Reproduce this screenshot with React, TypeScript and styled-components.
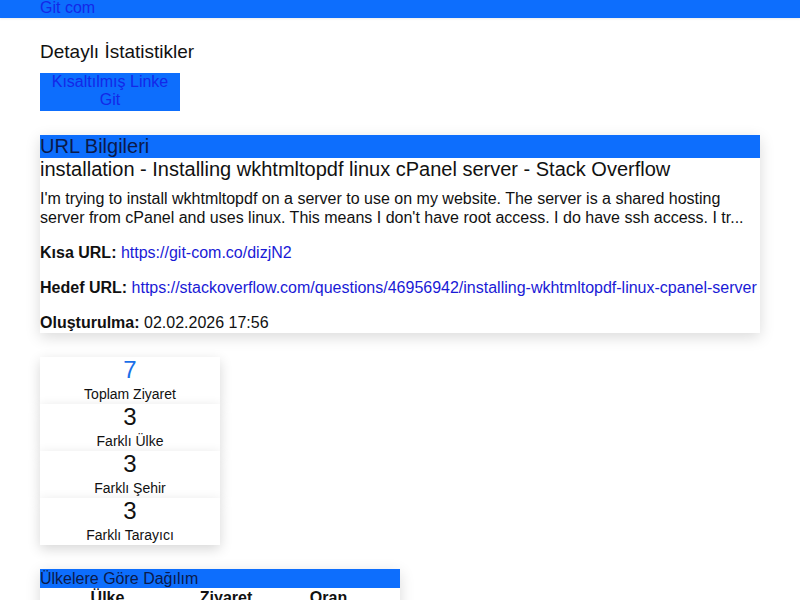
import React from 'react'
import styled, { createGlobalStyle } from 'styled-components'

const colors = {
  primary: '#0d6efd',
  link: '#1a1ad6',
  navLink: '#1428e8',
  ink: '#111111',
  onPrimary: '#0b1a4a',
}

const GlobalStyle = createGlobalStyle`
  html, body {
    margin: 0;
    padding: 0;
    background: #ffffff;
  }
  body {
    font-family: "Liberation Sans", Arial, sans-serif;
    font-size: 16px;
    color: ${colors.ink};
  }
`

const Navbar = styled.nav`
  height: 18px;
  background: ${colors.primary};
  padding: 0 40px;
  box-shadow: 0 1px 2px rgba(0, 0, 0, 0.08);
`

const Brand = styled.a`
  display: block;
  font-size: 16px;
  line-height: 16px;
  color: ${colors.navLink};
  text-decoration: none;
`

const Main = styled.main`
  width: 720px;
  padding: 23px 40px 40px;
  display: flex;
  flex-direction: column;
  align-items: flex-start;
`

const PageTitle = styled.h1`
  margin: 0;
  font-size: 19px;
  font-weight: 400;
  line-height: 22px;
`

const PrimaryButton = styled.a`
  display: block;
  width: 140px;
  margin-top: 10px;
  padding: 0 0 2px;
  background: ${colors.primary};
  color: ${colors.navLink};
  text-align: center;
  font-size: 16px;
  line-height: 18px;
  text-decoration: none;
`

const Card = styled.section<{ width?: string; gap?: string }>`
  width: ${(p) => p.width || '100%'};
  margin-top: ${(p) => p.gap || '24px'};
  background: #ffffff;
  box-shadow: 0 4px 14px rgba(0, 0, 0, 0.15);
`

const CardHeader = styled.h2<{ size?: string; lh?: string }>`
  margin: 0;
  background: ${colors.primary};
  color: ${colors.onPrimary};
  font-size: ${(p) => p.size || '20px'};
  line-height: ${(p) => p.lh || '23px'};
  font-weight: 400;
`

const CardBody = styled.div`
  padding-bottom: 1px;
`

const UrlTitle = styled.h3`
  margin: 0 0 8px;
  font-size: 20px;
  line-height: 23px;
  font-weight: 400;
`

const Description = styled.p`
  margin: 0 0 16px;
  line-height: 19px;
`

const InfoRow = styled.p`
  margin: 0 0 16px;
  line-height: 19px;
  &:last-child {
    margin-bottom: 0;
  }
`

const Label = styled.strong`
  font-weight: 700;
`

const Link = styled.a`
  color: ${colors.link};
  text-decoration: none;
`

const StatList = styled.div`
  margin-top: 24px;
  display: flex;
  flex-direction: column;
  width: 180px;
`

const StatCard = styled.div`
  display: flex;
  flex-direction: column;
  align-items: center;
  height: 47px;
  background: #ffffff;
  box-shadow: 0 4px 12px rgba(0, 0, 0, 0.16);
`

const StatValue = styled.div<{ accent?: boolean }>`
  font-size: 24px;
  line-height: 26px;
  color: ${(p) => (p.accent ? '#1a6fe8' : colors.ink)};
`

const StatLabel = styled.div`
  font-size: 14px;
  line-height: 17px;
  margin-top: 3px;
`

const Table = styled.table`
  border-collapse: collapse;
  width: 340px;
  table-layout: fixed;
`

const Th = styled.th<{ w: string }>`
  width: ${(p) => p.w};
  font-weight: 700;
  font-size: 16px;
  line-height: 19px;
  padding: 0;
  text-align: center;
`

const Td = styled.td`
  font-size: 16px;
  line-height: 19px;
  padding: 2px 0;
  text-align: center;
`

const url = {
  title: 'installation - Installing wkhtmltopdf linux cPanel server - Stack Overflow',
  description:
    "I'm trying to install wkhtmltopdf on a server to use on my website. The server is a shared hosting server from cPanel and uses linux. This means I don't have root access. I do have ssh access. I tr...",
  short: 'https://git-com.co/dizjN2',
  target: 'https://stackoverflow.com/questions/46956942/installing-wkhtmltopdf-linux-cpanel-server',
  created: '02.02.2026 17:56',
}

const stats = [
  { value: 7, label: 'Toplam Ziyaret', accent: true },
  { value: 3, label: 'Farklı Ülke' },
  { value: 3, label: 'Farklı Şehir' },
  { value: 3, label: 'Farklı Tarayıcı' },
]

const countries = [
  { name: 'Türkiye', visits: 5, rate: '71.4%' },
  { name: 'Almanya', visits: 1, rate: '14.3%' },
  { name: 'ABD', visits: 1, rate: '14.3%' },
]

export default function App() {
  return (
    <>
      <GlobalStyle />
      <Navbar>
        <Brand href="#">Git com</Brand>
      </Navbar>
      <Main>
        <PageTitle>Detaylı İstatistikler</PageTitle>
        <PrimaryButton href="#">Kısaltılmış Linke Git</PrimaryButton>

        <Card>
          <CardHeader>URL Bilgileri</CardHeader>
          <CardBody>
            <UrlTitle>{url.title}</UrlTitle>
            <Description>{url.description}</Description>
            <InfoRow>
              <Label>Kısa URL:</Label> <Link href="#">{url.short}</Link>
            </InfoRow>
            <InfoRow>
              <Label>Hedef URL:</Label> <Link href="#">{url.target}</Link>
            </InfoRow>
            <InfoRow>
              <Label>Oluşturulma:</Label> {url.created}
            </InfoRow>
          </CardBody>
        </Card>

        <StatList>
          {stats.map((s) => (
            <StatCard key={s.label}>
              <StatValue accent={s.accent}>{s.value}</StatValue>
              <StatLabel>{s.label}</StatLabel>
            </StatCard>
          ))}
        </StatList>

        <Card width="360px">
          <CardHeader size="16px" lh="19px">
            Ülkelere Göre Dağılım
          </CardHeader>
          <Table>
            <thead>
              <tr>
                <Th w="135px">Ülke</Th>
                <Th w="102px">Ziyaret</Th>
                <Th w="103px">Oran</Th>
              </tr>
            </thead>
            <tbody>
              {countries.map((c) => (
                <tr key={c.name}>
                  <Td>{c.name}</Td>
                  <Td>{c.visits}</Td>
                  <Td>{c.rate}</Td>
                </tr>
              ))}
            </tbody>
          </Table>
        </Card>
      </Main>
    </>
  )
}
